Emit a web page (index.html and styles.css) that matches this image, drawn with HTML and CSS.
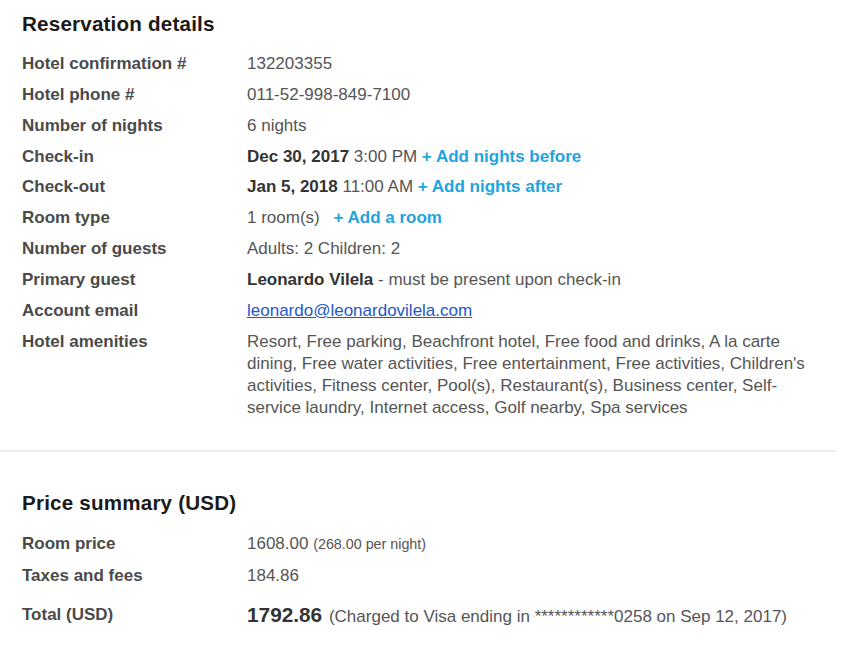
FILE: index.html
```html
<!DOCTYPE html>
<html>
<head>
<meta charset="utf-8">
<link rel="stylesheet" href="styles.css">
</head>
<body>
<div class="page">
  <section class="section details">
    <h2 class="title">Reservation details</h2>
    <div class="grid">
      <div class="label">Hotel confirmation #</div>
      <div class="value">132203355</div>

      <div class="label">Hotel phone #</div>
      <div class="value">011-52-998-849-7100</div>

      <div class="label">Number of nights</div>
      <div class="value">6 nights</div>

      <div class="label">Check-in</div>
      <div class="value"><b>Dec 30, 2017</b> 3:00 PM <a class="add" href="#">+ Add nights before</a></div>

      <div class="label">Check-out</div>
      <div class="value"><b>Jan 5, 2018</b> 11:00 AM <a class="add" href="#">+ Add nights after</a></div>

      <div class="label">Room type</div>
      <div class="value">1 room(s) <a class="add add-room" href="#">+ Add a room</a></div>

      <div class="label">Number of guests</div>
      <div class="value">Adults: 2 Children: 2</div>

      <div class="label">Primary guest</div>
      <div class="value"><b>Leonardo Vilela</b> - must be present upon check-in</div>

      <div class="label">Account email</div>
      <div class="value"><a class="email" href="#">leonardo@leonardovilela.com</a></div>

      <div class="label">Hotel amenities</div>
      <div class="value amenities">Resort, Free parking, Beachfront hotel, Free food and drinks, A la carte dining, Free water activities, Free entertainment, Free activities, Children's activities, Fitness center, Pool(s), Restaurant(s), Business center, Self-service laundry, Internet access, Golf nearby, Spa services</div>
    </div>
  </section>

  <hr class="divider">

  <section class="section price">
    <h2 class="title">Price summary (USD)</h2>
    <div class="grid price-grid">
      <div class="label">Room price</div>
      <div class="value">1608.00 <span class="small">(268.00 per night)</span></div>

      <div class="label">Taxes and fees</div>
      <div class="value">184.86</div>

      <div class="label total-label">Total (USD)</div>
      <div class="value total-value"><span class="total">1792.86</span> <span class="charged">(Charged to Visa ending in ************0258 on Sep 12, 2017)</span></div>
    </div>
  </section>
</div>
</body>
</html>
```

FILE: styles.css
```css
* { box-sizing: border-box; }

body {
  margin: 0;
  background: #ffffff;
  font-family: "Liberation Sans", Arial, sans-serif;
  font-size: 17px;
  color: #555555;
}

.page {
  width: 836px;
}

.section {
  padding-left: 22px;
}

.details {
  padding-top: 9px;
}

.title {
  margin: 0 0 9.5px 0;
  font-size: 20.6px;
  line-height: 30px;
  font-weight: bold;
  color: #1a1a1a;
  letter-spacing: 0.2px;
}

.grid {
  display: grid;
  grid-template-columns: 225px 575px;
}

.label,
.value {
  padding: 4.45px 0;
  line-height: 22px;
}

.label {
  color: #4a4a4a;
  font-weight: bold;
  font-size: 17px;
}

.value b {
  color: #333333;
  font-weight: bold;
}

.add {
  color: #1ea4de;
  font-weight: bold;
  text-decoration: none;
}

.add-room {
  margin-left: 9px;
}

.email {
  color: #2357c8;
  text-decoration: underline;
}

.divider {
  margin: 27px 0 0 0;
  border: 0;
  height: 2px;
  background: #eeeeee;
}

.price {
  padding-top: 36px;
}

.price-grid .label,
.price-grid .value {
  padding: 5px 0;
}

.price-grid .total-label,
.price-grid .total-value {
  padding-top: 12px;
}

.small {
  font-size: 14.3px;
}

.total {
  font-size: 20.8px;
  font-weight: bold;
  color: #333333;
}

.charged {
  margin-left: 2px;
}
```
